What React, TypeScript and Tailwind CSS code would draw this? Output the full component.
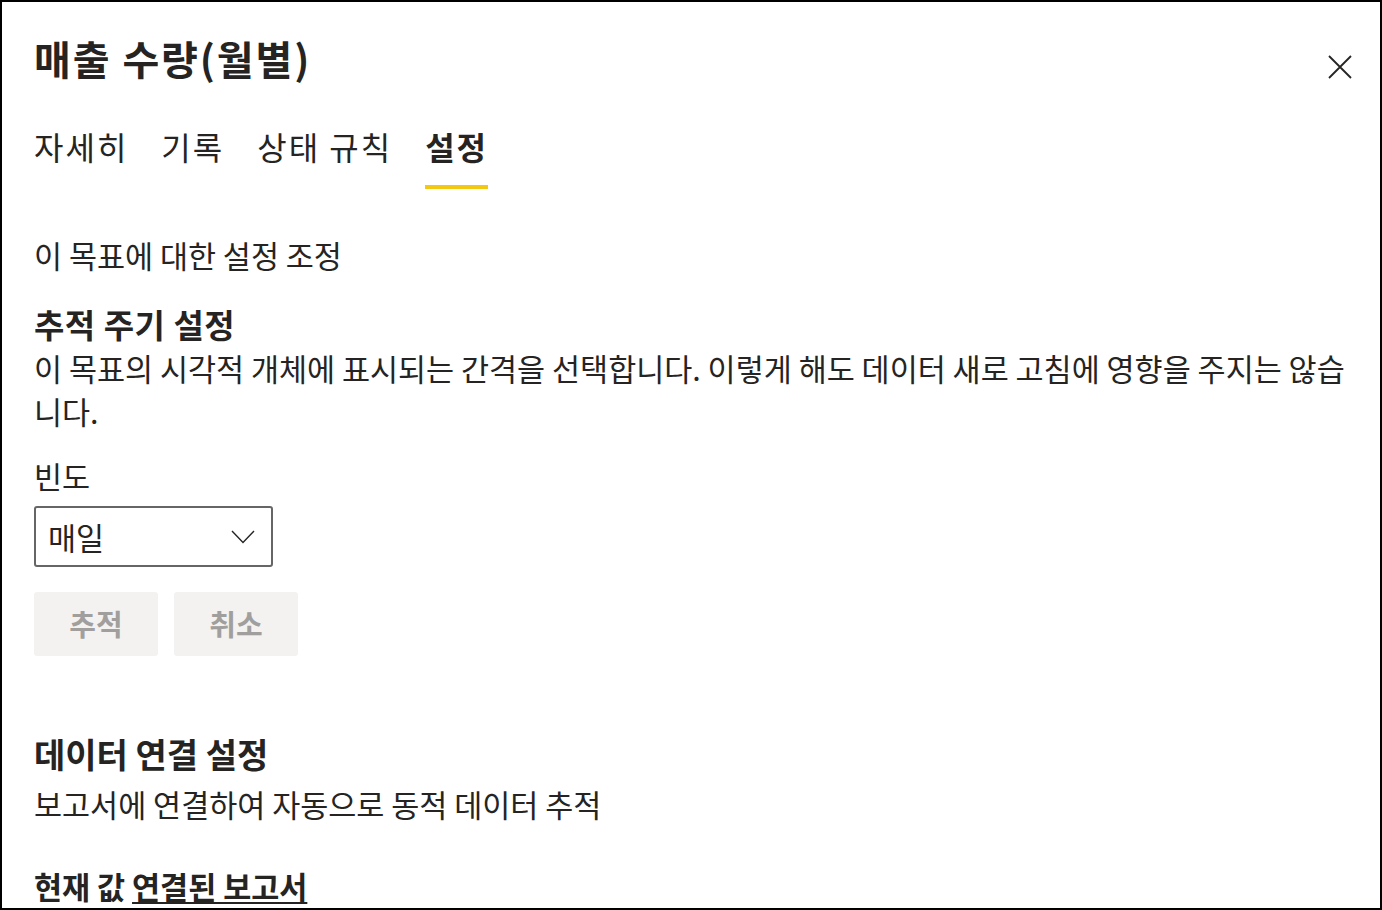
import React from 'react';

const font = { fontFamily: '"Noto Sans CJK KR", "Noto Sans", sans-serif' };

function Tab({ label, active }: { label: string; active?: boolean }) {
  return (
    <div className="flex flex-col">
      <span
        className={
          active
            ? 'text-[32px] leading-[40px] tracking-[2px] font-bold text-[#252423]'
            : 'text-[32px] leading-[40px] tracking-[2px] text-[#252423]'
        }
      >
        {label}
      </span>
      <div className={active ? 'mt-[19px] h-[4px] w-full bg-[#f2c811]' : 'mt-[19px] h-[4px] w-full'} />
    </div>
  );
}

export default function App() {
  return (
    <div style={font} className="w-[1382px] h-[910px] overflow-hidden border-2 border-black bg-white text-[#252423]">
      {/* Header */}
      <div className="flex items-start justify-between pl-[32px] pr-[28px] pt-[31px]">
        <h1 className="text-[40px] leading-[50px] tracking-[1.9px] font-bold">매출 수량(월별)</h1>
        <button className="mt-[22px] text-[#252423]">
          <svg width="24" height="24" viewBox="0 0 24 24" fill="none" stroke="currentColor" strokeWidth="1.8">
            <path d="M1 1L23 23M23 1L1 23" />
          </svg>
        </button>
      </div>

      {/* Tabs */}
      <div className="mt-[43px] flex gap-[33px] pl-[32px]">
        <Tab label="자세히" />
        <Tab label="기록" />
        <Tab label="상태 규칙" />
        <Tab label="설정" active />
      </div>

      <div className="pl-[32px] pr-[24px]">
        <p className="mt-[46px] text-[30.5px] leading-[40px]">이 목표에 대한 설정 조정</p>

        {/* 추적 주기 */}
        <h2 className="mt-[29px] text-[33px] leading-[40px] tracking-[0.5px] font-bold">추적 주기 설정</h2>
        <p className="mt-[3px] text-[30.5px] leading-[43px]">
          이 목표의 시각적 개체에 표시되는 간격을 선택합니다. 이렇게 해도 데이터 새로 고침에 영향을 주지는 않습니다.
        </p>

        <label className="mt-[23px] block text-[30.5px] leading-[40px]">빈도</label>
        <div className="mt-[10px] flex h-[61px] w-[239px] items-center justify-between rounded-[3px] border-2 border-[#666666] pl-[12px] pr-[16px]">
          <span className="text-[30.5px] leading-[40px]">매일</span>
          <svg width="24" height="14" viewBox="0 0 24 14" fill="none" stroke="#252423" strokeWidth="1.4">
            <path d="M1 1L12 12.5L23 1" />
          </svg>
        </div>

        <div className="mt-[25px] flex gap-[16px]">
          <button className="h-[64px] w-[124px] rounded-[3px] bg-[#f3f2f1] text-[29px] font-bold text-[#a19f9d]">추적</button>
          <button className="h-[64px] w-[124px] rounded-[3px] bg-[#f3f2f1] text-[29px] font-bold text-[#a19f9d]">취소</button>
        </div>

        {/* 데이터 연결 */}
        <h2 className="mt-[76px] text-[34px] leading-[44px] font-bold">데이터 연결 설정</h2>
        <p className="mt-[8px] text-[30.5px] leading-[40px]">보고서에 연결하여 자동으로 동적 데이터 추적</p>

        <p className="mt-[42px] text-[30.5px] leading-[40px] font-bold">
          현재 값 <span className="underline decoration-2 underline-offset-[3px]">연결된 보고서</span>
        </p>
      </div>
    </div>
  );
}
